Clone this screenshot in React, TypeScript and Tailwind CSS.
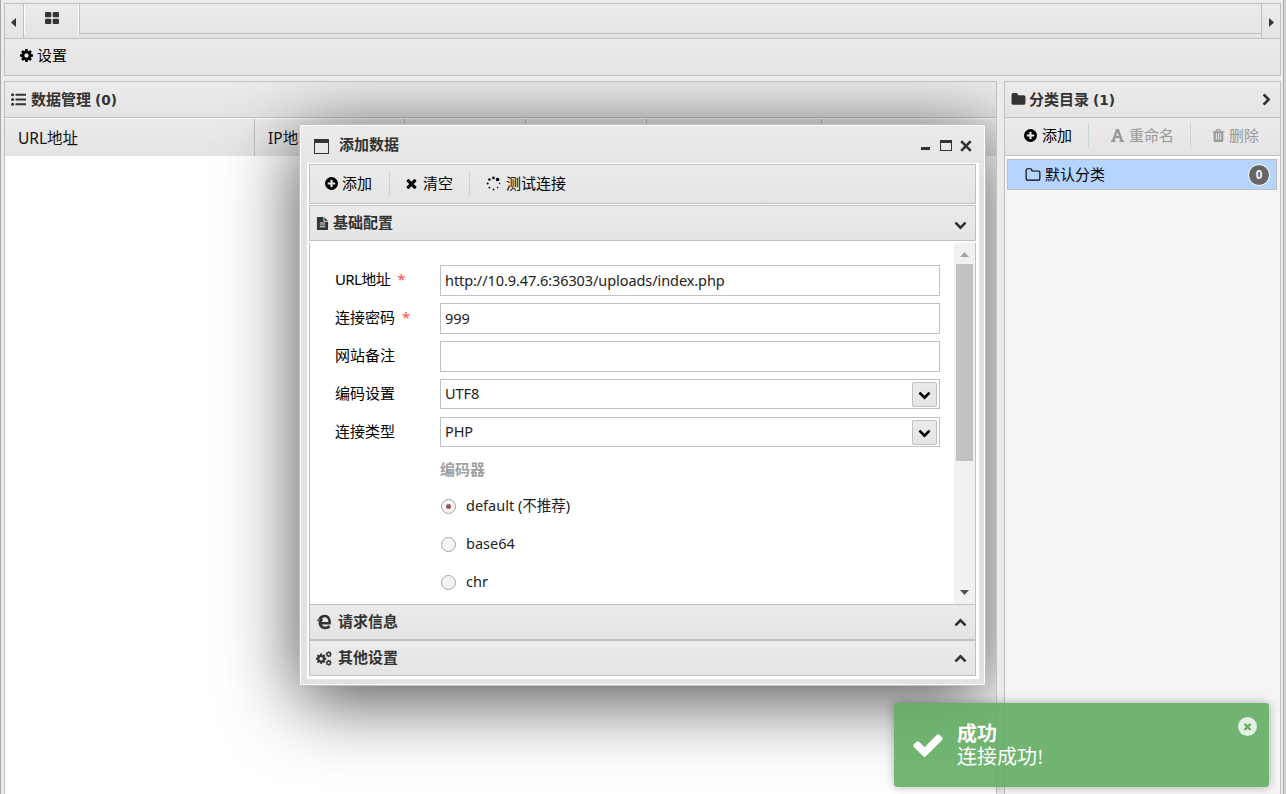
import React from 'react';
import { FaFont } from 'react-icons/fa';

const ICONS = {
    cog: 'M1152 896q0-106-75-181t-181-75-181 75-75 181 75 181 181 75 181-75 75-181zm512-109v222q0 12-8 23t-20 13l-185 28q-19 54-39 91 35 50 107 138 10 12 10 25t-9 23q-27 37-99 108t-94 71q-12 0-26-9l-138-108q-44 23-91 38-16 136-29 186-7 28-36 28h-222q-14 0-24.5-8.5t-11.5-21.5l-28-184q-49-16-90-37l-141 107q-10 9-25 9-14 0-25-11-126-114-165-168-7-10-7-23 0-12 8-23 15-21 51-66.5t54-70.5q-27-50-41-99l-183-27q-13-2-21-12.5t-8-23.5v-222q0-12 8-23t19-13l186-28q14-46 39-92-40-57-107-138-10-12-10-24 0-10 9-23 26-36 98.5-107.5t94.5-71.5q13 0 26 10l138 107q44-23 91-38 16-136 29-186 7-28 36-28h222q14 0 24.5 8.5t11.5 21.5l28 184q49 16 90 37l142-107q9-9 24-9 13 0 25 10 129 119 165 170 7 8 7 22 0 12-8 23-15 21-51 66.5t-54 70.5q26 50 41 98l183 28q13 2 21 12.5t8 23.5z',
    plus: 'M1344 960v-128q0-26-19-45t-45-19h-256v-256q0-26-19-45t-45-19h-128q-26 0-45 19t-19 45v256h-256q-26 0-45 19t-19 45v128q0 26 19 45t45 19h256v256q0 26 19 45t45 19h128q26 0 45-19t19-45v-256h256q26 0 45-19t19-45zm320-64q0 209-103 385.5t-279.5 279.5-385.5 103-385.5-103-279.5-279.5-103-385.5 103-385.5 279.5-279.5 385.5-103 385.5 103 279.5 279.5 103 385.5z',
    times: 'M1490 1322q0 40-28 68l-136 136q-28 28-68 28t-68-28l-294-294-294 294q-28 28-68 28t-68-28l-136-136q-28-28-28-68t28-68l294-294-294-294q-28-28-28-68t28-68l136-136q28-28 68-28t68 28l294 294 294-294q28-28 68-28t68 28l136 136q28 28 28 68t-28 68l-294 294 294 294q28 28 28 68z',
    chevron: 'M1683 808l-742 741q-19 19-45 19t-45-19l-742-741q-19-19-19-45.5t19-45.5l166-165q19-19 45-19t45 19l531 531 531-531q19-19 45-19t45 19l166 165q19 19 19 45.5t-19 45.5z',
    folder: 'M1728 608v704q0 92-66 158t-158 66h-1216q-92 0-158-66t-66-158v-960q0-92 66-158t158-66h320q92 0 158 66t66 158v32h672q92 0 158 66t66 158z',
    folderOpen: 'M1600 1312v-704q0-40-28-68t-68-28h-704q-40 0-68-28t-28-68v-64q0-40-28-68t-68-28h-320q-40 0-68 28t-28 68v960q0 40 28 68t68 28h1216q40 0 68-28t28-68zm128-704v704q0 92-66 158t-158 66h-1216q-92 0-158-66t-66-158v-960q0-92 66-158t158-66h320q92 0 158 66t66 158v32h672q92 0 158 66t66 158z',
    file: 'M1596 476q14 14 28 36h-472v-472q22 14 36 28zm-476 164h544v1056q0 40-28 68t-68 28h-1344q-40 0-68-28t-28-68v-1600q0-40 28-68t68-28h800v544q0 40 28 68t68 28zm160 736v-64q0-14-9-23t-23-9h-704q-14 0-23 9t-9 23v64q0 14 9 23t23 9h704q14 0 23-9t9-23zm0-256v-64q0-14-9-23t-23-9h-704q-14 0-23 9t-9 23v64q0 14 9 23t23 9h704q14 0 23-9t9-23zm0-256v-64q0-14-9-23t-23-9h-704q-14 0-23 9t-9 23v64q0 14 9 23t23 9h704q14 0 23-9t9-23z',
    trash: 'M704 1376v-704q0-14-9-23t-23-9h-64q-14 0-23 9t-9 23v704q0 14 9 23t23 9h64q14 0 23-9t9-23zm256 0v-704q0-14-9-23t-23-9h-64q-14 0-23 9t-9 23v704q0 14 9 23t23 9h64q14 0 23-9t9-23zm256 0v-704q0-14-9-23t-23-9h-64q-14 0-23 9t-9 23v704q0 14 9 23t23 9h64q14 0 23-9t9-23zm-544-992h448l-48-117q-7-9-17-11h-317q-10 2-17 11zm928 32v64q0 14-9 23t-23 9h-96v948q0 83-47 143.5t-113 60.5h-832q-66 0-113-58.5t-47-141.5v-952h-96q-14 0-23-9t-9-23v-64q0-14 9-23t23-9h309l70-167q15-37 54-63t79-26h320q40 0 79 26t54 63l70 167h309q14 0 23 9t9 23z',
    check: 'M1671 566q0 40-28 68l-724 724-136 136q-28 28-68 28t-68-28l-136-136-362-362q-28-28-28-68t28-68l136-136q28-28 68-28t68 28l294 295 656-657q28-28 68-28t68 28l136 136q28 28 28 68z',
};

const Icon: React.FC<{ name: keyof typeof ICONS; className?: string }> = ({ name, className = 'size-[15px]' }) => (
    <svg viewBox="0 0 1792 1792" fill="currentColor" className={`shrink-0 ${className}`}>
        <path d={ICONS[name]} />
    </svg>
);

const ListIcon = () => (
    <svg viewBox="0 0 15 13" fill="currentColor" className="h-[13px] w-[15px] shrink-0">
        {[1.7, 6.5, 11.3].map((y) => (
            <g key={y}>
                <circle cx="1.6" cy={y} r="1.5" />
                <rect x="4.5" y={y - 1} width="10.5" height="2" rx="0.3" />
            </g>
        ))}
    </svg>
);

const GridIcon = () => (
    <svg viewBox="0 0 14 12" fill="currentColor" className="h-3 w-3.5 shrink-0">
        <rect width="6.3" height="5.3" rx="1" />
        <rect x="7.7" width="6.3" height="5.3" rx="1" />
        <rect y="6.7" width="6.3" height="5.3" rx="1" />
        <rect x="7.7" y="6.7" width="6.3" height="5.3" rx="1" />
    </svg>
);

const SpinnerIcon = () => (
    <svg viewBox="0 0 15 15" fill="currentColor" className="size-[15px] shrink-0">
        <circle cx="7.5" cy="1.9" r="1.4" />
        <circle cx="11.6" cy="3.5" r="1.8" />
        <circle cx="13.5" cy="7.5" r="0.7" />
        <circle cx="11.6" cy="11.6" r="0.8" />
        <circle cx="7.5" cy="13.4" r="0.9" />
        <circle cx="3.4" cy="11.6" r="0.95" />
        <circle cx="1.7" cy="7.5" r="1" />
        <circle cx="3.4" cy="3.5" r="1.2" />
    </svg>
);

const CogsIcon = () => (
    <svg viewBox="0 0 16 15" fill="currentColor" className="h-[15px] w-4 shrink-0">
        <svg x="-0.9" y="1.7" width="12" height="12" viewBox="0 0 1792 1792"><path d={ICONS.cog} /></svg>
        <svg x="9.2" y="-0.2" width="7" height="7" viewBox="0 0 1792 1792"><path d={ICONS.cog} /></svg>
        <svg x="9.2" y="8.2" width="7" height="7" viewBox="0 0 1792 1792"><path d={ICONS.cog} /></svg>
    </svg>
);

const EdgeIcon = () => (
    <svg viewBox="0 0 15 16" fill="none" stroke="currentColor" className="mr-1.5 h-4 w-[15px] shrink-0">
        <path d="M3.6 9.2H12.6C12.9 4.5 10.8 1.9 7.6 1.9 5.6 1.9 3.9 3 2.9 4.6" strokeWidth="2.5" />
        <path d="M5.4 4.9C2.8 6.6 2.2 9.4 3.9 11.9 5.6 14.3 9.4 14.5 12.7 12.6" strokeWidth="2.9" />
        <path d="M.6 7.1C1.3 4.9 3.2 3.4 5.8 3.3" strokeWidth="1.3" />
    </svg>
);

const CloseIcon = () => (
    <svg viewBox="0 0 12 12" stroke="currentColor" strokeWidth="2.6" className="mt-[3px] ml-[8px] size-3 shrink-0">
        <path d="M1.2 1.2 10.8 10.8M10.8 1.2 1.2 10.8" />
    </svg>
);

const BAR = 'bg-linear-to-b from-[#ebebeb] to-[#e4e4e4]';

type FieldProps = { label: string; value: string; required?: boolean; select?: boolean; labelClass?: string };

const Field: React.FC<FieldProps> = ({ label, value, required, select, labelClass = '' }) => (
    <div className="mb-[7px] flex h-[31px]">
        <label className="w-[105px] shrink-0 text-[15px] leading-[29px] text-black">
            <span className={labelClass}>{label}</span>
            {required && <span className="ml-[7px] text-[#ff4d4d]">*</span>}
        </label>
        <div className={`flex w-[500px] items-center justify-between border border-[#c0c0c0] bg-white pr-0.5 pl-1 ${select ? 'h-[30px]' : 'h-[31px]'}`}>
            <span className="text-[14.5px] tracking-[-0.08px] text-[#222]">{value}</span>
            {select && (
                <span className={`flex h-[25px] w-[25px] items-center justify-center rounded-[2px] border border-[#c0c0c0] text-black ${BAR}`}>
                    <Icon name="chevron" className="size-[13px]" />
                </span>
            )}
        </div>
    </div>
);

const Radio: React.FC<{ label: string; checked?: boolean }> = ({ label, checked }) => (
    <div className="ml-[105px] flex h-[38px] items-center">
        <span className="ml-px flex size-[15px] items-center justify-center rounded-full border-[1.5px] border-[#aaa3a3] bg-[#f4f4f4]">
            {checked && <span className="size-[5px] rounded-full bg-[#965858]" />}
        </span>
        <span className="ml-[10px] text-[14.5px] text-[#222]">{label}</span>
    </div>
);

const Separator = () => <span className="h-[25px] w-px bg-[#c7d5da]" />;

const AddDataWindow = () => (
    <div className="absolute top-[42px] left-[294px] flex h-[562px] w-[687px] flex-col rounded-[3px] border border-[#c0c0c0] bg-linear-to-b from-[#ebebeb] from-0% to-[#e2e2e2] to-10% shadow-[0_14px_76px_rgba(0,0,0,0.7)] inset-ring inset-ring-white">
        <div className="flex h-[38px] shrink-0 items-center pr-[13px] pl-[14px] text-[#333]">
            <span className="mt-1 h-[15px] w-[15px] border border-t-4 border-[#333]" />
            <span className="ml-2.5 grow text-[15px] font-bold">添加数据</span>
            <span className="mt-2 h-[3px] w-[9px] bg-[#333]" />
            <span className="mt-[3px] ml-[10px] h-[11px] w-3 border border-t-3 border-[#333]" />
            <CloseIcon />
        </div>
        <div className="mr-[6px] mb-[6px] ml-[7px] flex h-[516px] flex-col border-2 border-t border-white bg-white">
            <div className={`mr-px flex h-10 shrink-0 items-center border border-[#c0c0c0] pb-0.5 text-[15px] text-black ${BAR}`}>
                <button className="ml-3.5 flex w-[65px] items-center gap-[3px]"><Icon name="plus" />添加</button>
                <Separator />
                <button className="ml-[14px] flex w-[65px] items-center gap-1"><Icon name="times" />清空</button>
                <Separator />
                <button className="ml-4 flex items-center gap-[5px]"><SpinnerIcon />测试连接</button>
            </div>
            <div className={`mt-px mr-px flex h-9 shrink-0 items-center border border-[#c0c0c0] pr-2 pl-1.5 text-[15px] font-bold text-[#333] ${BAR}`}>
                <Icon name="file" className="mr-[4px] h-[15px] w-[13px]" />
                <span className="mb-0.5 grow">基础配置</span>
                <Icon name="chevron" className="mt-[3px] size-[13px]" />
            </div>
            <div className="mt-[2px] mr-px flex h-[361px] shrink-0 border-x border-[#c0c0c0] bg-white">
                <div className="grow overflow-hidden pt-[22px] pl-[25px]">
                    <Field label="URL地址" labelClass="tracking-[-0.6px]" value="http://10.9.47.6:36303/uploads/index.php" required />
                    <Field label="连接密码" value="999" required />
                    <Field label="网站备注" value="" />
                    <Field label="编码设置" value="UTF8" select />
                    <Field label="连接类型" value="PHP" select />
                    <div className="ml-[105px] h-[32px] text-[15px] leading-[28px] font-bold text-[#a0a0a0]">编码器</div>
                    <Radio label="default (不推荐)" checked />
                    <Radio label="base64" />
                    <Radio label="chr" />
                </div>
                <div className="flex w-[21px] shrink-0 flex-col items-center bg-[#f1f1f1]">
                    <svg viewBox="0 0 9 5" className="mt-[9px] h-[5px] w-[9px]"><path d="M0 5 4.5 0 9 5z" fill="#a3a3a3" /></svg>
                    <span className="mt-[7px] h-[197px] w-[17px] bg-[#c1c1c1]" />
                    <svg viewBox="0 0 9 5" className="mt-auto mb-[9px] h-[5px] w-[9px]"><path d="M0 0h9L4.5 5z" fill="#505050" /></svg>
                </div>
            </div>
            <div className={`mr-px flex h-[36px] shrink-0 items-center border border-[#c0c0c0] pr-2 pl-[7px] text-[15px] font-bold text-[#333] ${BAR}`}>
                <EdgeIcon />
                <span className="mb-0.5 grow">请求信息</span>
                <Icon name="chevron" className="mt-[3px] size-[13px] rotate-180" />
            </div>
            <div className={`mr-px flex h-[36px] shrink-0 items-center border border-[#c0c0c0] pr-2 pl-1.5 text-[15px] font-bold text-[#333] ${BAR}`}>
                <CogsIcon />
                <span className="mb-0.5 ml-1.5 grow">其他设置</span>
                <Icon name="chevron" className="mt-[3px] size-[13px] rotate-180" />
            </div>
        </div>
    </div>
);

const COLUMNS = [
    { label: 'URL地址', width: 'w-[250px]' },
    { label: 'IP地址', width: 'w-[150px]' },
    { label: '', width: 'w-[121px]' },
    { label: '', width: 'w-[121px]' },
    { label: '', width: 'w-[175px]' },
];

const Count: React.FC<{ value: number }> = ({ value }) => (
    <span className="font-['DejaVu_Sans'] text-[13.7px]">({value})</span>
);

const DataPanel = () => (
    <section className="relative flex w-[993px] flex-col overflow-hidden border border-b-0 border-[#c0c0c0] bg-white">
        <header className={`flex h-9 shrink-0 items-center gap-[5px] border-b border-[#c0c0c0] pl-1.5 text-[15px] font-bold text-[#333] ${BAR}`}>
            <ListIcon />
            <span>数据管理 <Count value={0} /></span>
        </header>
        <div className={`mt-px flex h-[37px] shrink-0 text-[15.5px] text-[#111] ${BAR}`}>
            {COLUMNS.map((col, i) => (
                <div key={i} className={`overflow-hidden border-r border-[#c0c0c0] pl-[13px] leading-[38px] ${col.width}`}>{col.label}</div>
            ))}
        </div>
        <AddDataWindow />
    </section>
);

const CategoryPanel = () => (
    <section className="flex w-[277px] flex-col border border-b-0 border-[#c0c0c0] bg-[#f4f4f4]">
        <header className={`flex h-9 shrink-0 items-center border-b border-[#c0c0c0] pr-2 pl-1.5 text-[15px] font-bold text-[#333] ${BAR}`}>
            <Icon name="folder" />
            <span className="ml-[3px] grow">分类目录 <Count value={1} /></span>
            <Icon name="chevron" className="size-[13px] -rotate-90" />
        </header>
        <div className={`flex h-[38px] shrink-0 items-center border-b border-[#c0c0c0] pb-0.5 text-[15px] text-[#999] ${BAR}`}>
            <button className="ml-[18px] flex w-[65px] items-center gap-1 text-black"><Icon name="plus" />添加</button>
            <Separator />
            <button className="ml-[21px] flex w-[80px] items-center gap-1"><FaFont className="size-[15px]" />重命名</button>
            <Separator />
            <button className="ml-5 flex items-center gap-[3px]"><Icon name="trash" />删除</button>
        </div>
        <div className="h-0.5 shrink-0 bg-white" />
        <div className="mt-px mr-[3px] ml-0.5 flex h-[31px] shrink-0 items-center border border-[#c0c0c0] bg-[#b5d5ff] pr-[6px] pl-[17px] text-[15px] text-black">
            <Icon name="folderOpen" className="size-4" />
            <span className="mb-px ml-1 grow">默认分类</span>
            <span className="flex size-[22px] items-center justify-center rounded-full border border-white bg-[#666] font-['Liberation_Sans'] text-xs font-bold text-white">0</span>
        </div>
    </section>
);

const Toast = () => (
    <div className="absolute top-[703px] left-[894px] flex h-[84px] w-[375px] rounded-[3px] bg-[#63ac63]/90 font-['Liberation_Serif','Noto_Sans_CJK_SC',serif] text-white shadow-[0_0_10px_rgba(0,0,0,0.3)]">
        <Icon name="check" className="mt-[25px] ml-[17px] size-[34px]" />
        <div className="mt-5 ml-3 grow text-xl leading-[23px]">
            <div className="font-bold">成功</div>
            <div>连接成功!</div>
        </div>
        <span className="mt-3.5 mr-3 flex size-[19px] items-center justify-center rounded-full bg-white/80 text-[#63ac63]">
            <Icon name="times" className="size-[11px]" />
        </span>
    </div>
);

export default function App() {
    return (
        <div className="relative flex h-[794px] w-[1286px] overflow-hidden bg-[#ebebeb] font-['Noto_Sans','Noto_Sans_CJK_SC',sans-serif]">
            <div className="w-1 shrink-0 border-l border-[#a8a8a8]" />
            <main className="flex w-[1277px] shrink-0 flex-col pt-[3px]">
                <nav className={`flex h-9 shrink-0 border border-[#c0c0c0] text-[#333] ${BAR}`}>
                    <button className="flex w-[19px] items-center justify-center border-r border-[#c0c0c0] pr-px">
                        <svg viewBox="0 0 5 9" className="mt-0.5 h-[9px] w-[5px]"><path d="M5 0v9L0 4.5z" fill="#333" /></svg>
                    </button>
                    <div className="mb-1 flex w-[55px] justify-center border-x border-white pt-2"><GridIcon /></div>
                    <div className="mb-1 grow border-b border-l border-[#c0c0c0]" />
                    <button className="flex w-[19px] items-center justify-center border-l border-[#c0c0c0]">
                        <svg viewBox="0 0 5 9" className="mt-0.5 h-[9px] w-[5px]"><path d="M0 0v9l5-4.5z" fill="#333" /></svg>
                    </button>
                </nav>
                <div className={`flex h-[37px] shrink-0 items-center border border-t-0 border-[#c0c0c0] pb-1 pl-3.5 text-[15px] text-black ${BAR}`}>
                    <Icon name="cog" />
                    <span className="ml-[3px]">设置</span>
                </div>
                <div className="mt-[5px] flex grow justify-between">
                    <DataPanel />
                    <CategoryPanel />
                </div>
            </main>
            <div className="ml-[2px] w-[3px] border-l border-[#a8a8a8] bg-[#d2d4d2]" />
            <Toast />
        </div>
    );
}
